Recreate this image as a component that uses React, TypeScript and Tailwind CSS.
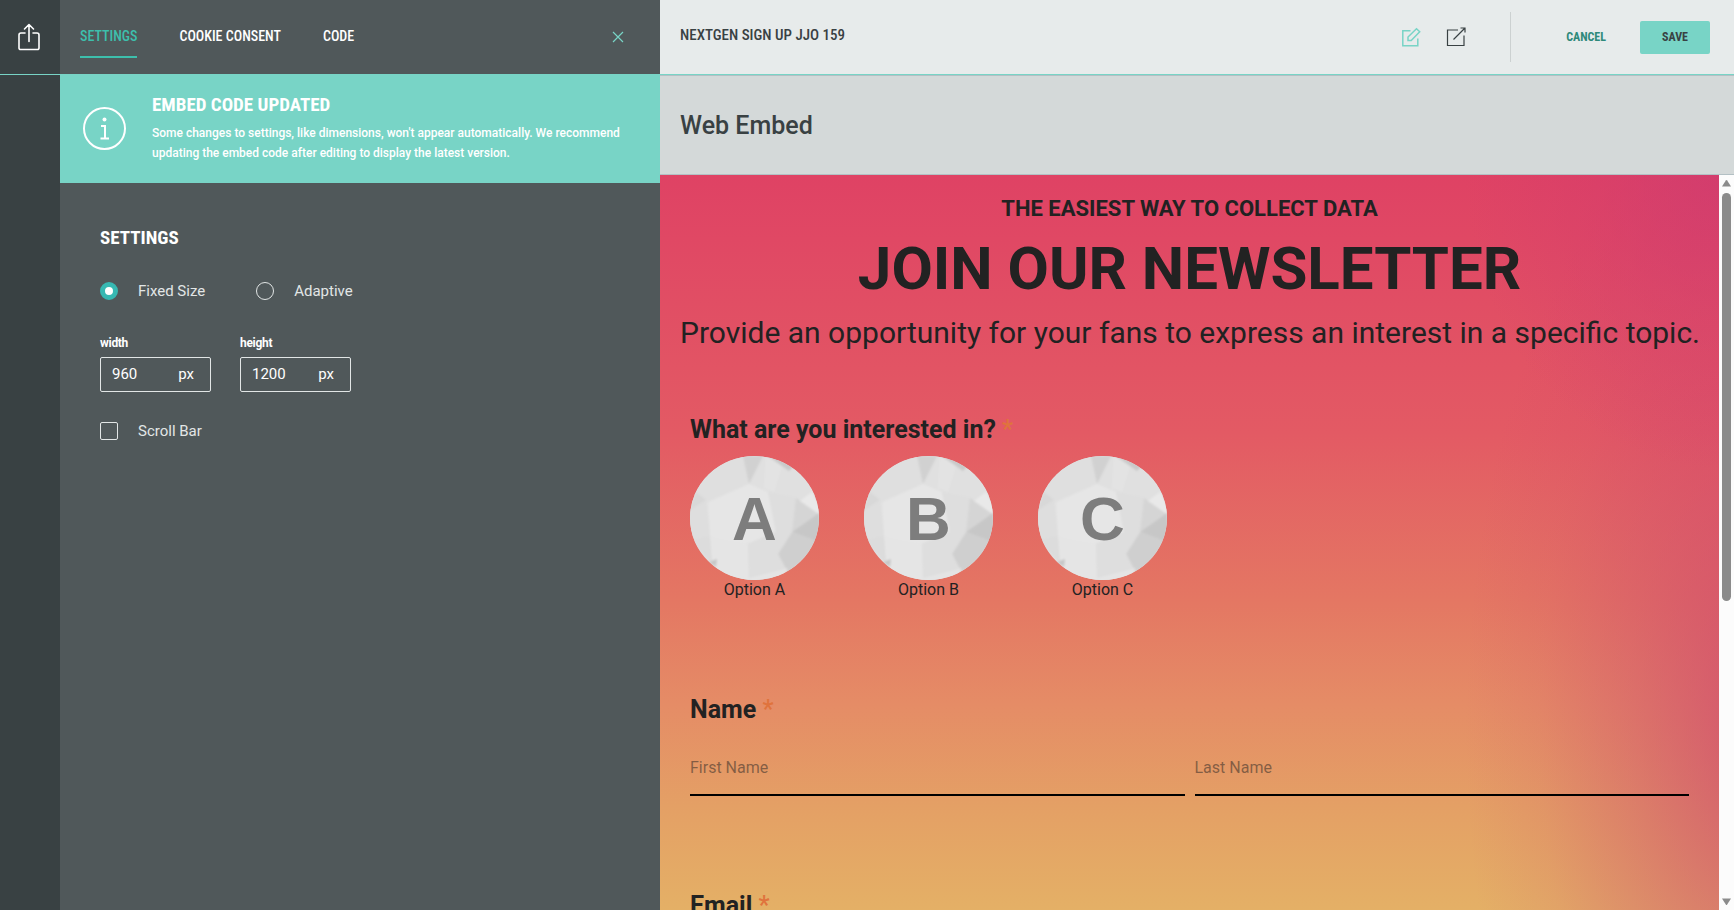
import React from "react";

const condensed = "font-['Roboto_Condensed','Liberation_Sans_Narrow',Roboto,sans-serif]";

function ShareIcon() {
  return (
    <svg width="22" height="28" viewBox="0 0 22 28" fill="none" stroke="#fff" strokeWidth="1.6" strokeLinecap="round" strokeLinejoin="round" aria-hidden="true">
      <path d="M7 10H3a2 2 0 0 0-2 2v13a1.5 1.5 0 0 0 1.5 1.500h17A1.500 1.500 0 0 0 21 25V12a2 2 0 0 0-2-2h-4M11 18.500V1.500M6.500 6 11 1.500 15.500 6" />
    </svg>
  );
}

function Facets() {
  return (
    <svg className="absolute inset-0 h-full w-full" viewBox="0 0 129 124" preserveAspectRatio="none" aria-hidden="true">
      <defs>
        <filter id="facet-soft"><feGaussianBlur stdDeviation="0.9" /></filter>
      </defs>
      <rect width="129" height="124" fill="#e0e0e0" />
      <g filter="url(#facet-soft)">
        <polygon points="-4,-4 53,-4 58,28 16,47 -4,35" fill="#dfdfdf" />
        <polygon points="-4,35 16,47 20,80 -4,84" fill="#dedede" />
        <polygon points="0,54 6,36 16,44" fill="#d8d8d8" />
        <polygon points="53,0 77,0 59,28" fill="#d1d1d1" />
        <polygon points="75,-4 133,-4 133,40 112,45 78,35 59,28" fill="#e0e0e0" />
        <polygon points="76,0 92,10 84,36 74,32" fill="#e3e3e3" />
        <polygon points="78,0 112,2 99,15" fill="#c9c9c9" />
        <polygon points="59,28 18,46 20,80 26,84 58,88 86,76 78,36" fill="#e6e6e6" />
        <polygon points="78,36 106,42 102,76 86,76" fill="#dedede" />
        <polygon points="106,42 129,57 102,76" fill="#d5d5d5" />
        <polygon points="110,45 122,36 133,56 127,57" fill="#e9e9e9" />
        <polygon points="102,76 129,57 133,88" fill="#c7c7c7" />
        <polygon points="102,76 133,88 98,118 88,98" fill="#cfcfcf" />
        <polygon points="86,76 102,76 88,98 98,116 59,124 57,88" fill="#dedede" />
        <polygon points="20,80 0,84 22,107 30,98" fill="#dcdcdc" />
        <polygon points="20,80 58,88 59,128 30,128 22,107" fill="#e5e5e5" />
        <polygon points="59,122 98,112 90,128 59,128" fill="#e4e4e4" />
        <polygon points="27,103 19,106 26,111" fill="#c6c6c6" />
      </g>
    </svg>
  );
}

function Option({ letter }: { letter: string }) {
  return (
    <button type="button" className="flex w-[129px] flex-col items-center">
      <span className="relative flex h-[124px] w-full items-center justify-center overflow-hidden rounded-[50%] pt-0.5">
        <Facets />
        <span className="relative font-['Liberation_Sans',sans-serif] text-[62px] leading-[64px] font-bold text-[#7d7d7d]">{letter}</span>
      </span>
      <span className="text-base leading-5">Option {letter}</span>
    </button>
  );
}

function Question({ children }: { children: React.ReactNode }) {
  return (
    <h3 className="text-[25px] leading-7 font-bold">
      {children} <span className="font-medium text-[#e0733d]">*</span>
    </h3>
  );
}

function SizeField({ id, label, value }: { id: string; label: string; value: string }) {
  return (
    <div className="w-[111px]">
      <label htmlFor={id} className="block text-xs leading-4 font-bold tracking-tight">{label}</label>
      <div className="mt-1.5 flex h-[35px] items-center rounded-xs border border-[#e2e6e6] pr-4 pb-px pl-[11px] text-[15px]">
        <input id={id} defaultValue={value} className="w-full min-w-0 bg-transparent outline-none" />
        <span>px</span>
      </div>
    </div>
  );
}

function NameInput({ label }: { label: string }) {
  return (
    <input
      aria-label={label}
      placeholder={label}
      className="h-14 w-full min-w-0 flex-1 border-b-2 border-black bg-transparent text-base outline-none placeholder:text-[#222]/50"
    />
  );
}

export default function App() {
  return (
    <div className="flex h-screen overflow-hidden bg-[#50585a] font-[Roboto,sans-serif] text-[#222]">
      <aside className="flex w-[60px] shrink-0 flex-col bg-[#394143]">
        <div className="flex h-[75px] items-center justify-center border-b border-[#78d4c6] pr-0.5">
          <button type="button" aria-label="Share"><ShareIcon /></button>
        </div>
      </aside>

      <section className="flex w-[600px] shrink-0 flex-col text-white">
        <nav className={`flex h-[74px] shrink-0 items-center gap-[42px] pr-9 pl-5 text-sm leading-5 font-medium ${condensed}`}>
          <a href="#settings" className="mt-2.5 border-b-2 border-[#3dbfac] pb-2.5 text-[#3dbfac]">SETTINGS</a>
          <a href="#cookie" className="pb-0.5">COOKIE CONSENT</a>
          <a href="#code" className="pb-0.5">CODE</a>
          <button type="button" aria-label="Close" className="ml-auto">
            <svg width="12" height="12" viewBox="0 0 12 12" stroke="#78d4c6" strokeWidth="1.200" aria-hidden="true"><path d="M1 1l10 10M11 1L1 11" /></svg>
          </button>
        </nav>

        <div className="flex h-[109px] shrink-0 items-center bg-[#78d4c6] pl-[23px]">
          <svg width="43" height="43" viewBox="0 0 43 43" fill="none" stroke="#fff" strokeWidth="2" className="shrink-0" aria-hidden="true">
            <circle cx="21.500" cy="21.500" r="20.500" />
            <path d="M18 19h4v12M17.500 31.500h8.500" />
            <circle cx="21.500" cy="12.500" r="2" fill="#fff" stroke="none" />
          </svg>
          <div className="ml-[26px] pb-0.5">
            <h2 className={`text-[19px] leading-6 font-bold ${condensed}`}>EMBED CODE UPDATED</h2>
            <p className="mt-1.5 w-[480px] text-xs leading-5 font-medium">
              Some changes to settings, like dimensions, won't appear automatically. We recommend updating the embed code after editing to display the latest version.
            </p>
          </div>
        </div>

        <form className="px-10 pt-[43px]">
          <h2 className={`text-[19px] leading-6 font-bold ${condensed}`}>SETTINGS</h2>
          <div className="mt-[31px] flex items-center text-[15px] leading-5 text-[#e2e6e6]">
            <label className="mr-[51px] flex items-center gap-5">
              <input type="radio" name="size" defaultChecked className="h-[18px] w-[18px] appearance-none rounded-full border border-[#e2e6e6] checked:border-[5px] checked:border-[#37b8b2] checked:bg-white" />
              Fixed Size
            </label>
            <label className="flex items-center gap-5">
              <input type="radio" name="size" className="h-[18px] w-[18px] appearance-none rounded-full border border-[#e2e6e6] checked:border-[5px] checked:border-[#37b8b2] checked:bg-white" />
              Adaptive
            </label>
          </div>
          <div className="mt-[34px] flex gap-[29px]">
            <SizeField id="width" label="width" value="960" />
            <SizeField id="height" label="height" value="1200" />
          </div>
          <label className="mt-[29px] flex items-center gap-5 text-[15px] leading-5 text-[#e2e6e6]">
            <input type="checkbox" className="h-[18px] w-[18px] appearance-none rounded-xs border border-[#e2e6e6] checked:bg-[#37b8b2]" />
            Scroll Bar
          </label>
        </form>
      </section>

      <main className="flex min-w-0 flex-1 flex-col">
        <header className={`flex h-[75px] shrink-0 items-center border-b border-[#78d4c6] bg-[#e7ebeb] pr-6 pl-5 ${condensed}`}>
          <h1 className="pb-1 text-[15px] leading-5 font-medium text-[#394143]">NEXTGEN SIGN UP JJO 159</h1>
          <button type="button" aria-label="Edit" className="ml-auto">
            <svg width="20" height="20" viewBox="0 0 20 20" fill="none" stroke="#78d4c6" strokeWidth="1.500" aria-hidden="true">
              <path d="M9.500 3.800H1.800v15h15V11.500" /><path d="M7 13.500V10L15.500 1.700l3.200 3-8.500 8.800z" />
            </svg>
          </button>
          <a href="#preview" aria-label="Open preview" className="ml-[25px]">
            <svg width="20" height="20" viewBox="0 0 20 20" fill="none" stroke="#394143" strokeWidth="1.200" aria-hidden="true">
              <path d="M12 3H1.500v15.500H18V8.500M7.500 12.500 19 1M14.500 1H19v4.500" />
            </svg>
          </a>
          <div className="ml-11 h-[50px] w-px bg-[#ccd1d1]" />
          <button type="button" className="ml-[55px] text-xs font-bold text-[#2e897a]">CANCEL</button>
          <button type="button" className="ml-[34px] h-[33px] w-[70px] rounded-xs bg-[#78d4c6] text-xs font-bold text-[#394143]">SAVE</button>
        </header>
        <div className="flex h-[100px] shrink-0 items-center border-y border-[#b3c0c4] bg-[#d4d9d9] pt-0.5 pl-5">
          <h2 className="text-[25px] font-medium text-[#394143]">Web Embed</h2>
        </div>

        <div className="flex min-h-0 flex-1">
          <div className="min-w-0 flex-1 overflow-hidden bg-[radial-gradient(ellipse_24%_40%_at_100%_0%,#cf3b70c0_0%,#d03a7050_50%,#d03a7000_100%),radial-gradient(ellipse_28%_85%_at_104%_75%,#cc4070b8_0%,#cc407058_45%,#cc40701c_75%,#cc407000_100%),linear-gradient(to_bottom,#df4264_0%,#e35a64_35%,#e47763_58%,#e58c66_72%,#e4a065_86%,#e4b066_100%)] px-5 pt-5">
            <header className="text-center">
              <p className="text-[22px] leading-7 font-bold">THE EASIEST WAY TO COLLECT DATA</p>
              <h2 className="mt-3 text-[60px] leading-[68px] font-bold">JOIN OUR NEWSLETTER</h2>
              <p className="mt-3 text-[30px] leading-9 whitespace-nowrap">Provide an opportunity for your fans to express an interest in a specific topic.</p>
            </header>
            <section className="mt-[65px] px-2.5">
              <Question>What are you interested in?</Question>
              <div className="mt-3 flex gap-[45px]">
                <Option letter="A" />
                <Option letter="B" />
                <Option letter="C" />
              </div>
            </section>
            <section className="mt-24 px-2.5">
              <Question>Name</Question>
              <div className="mt-4 flex gap-2.5">
                <NameInput label="First Name" />
                <NameInput label="Last Name" />
              </div>
            </section>
            <section className="mt-24 px-2.5">
              <Question>Email</Question>
            </section>
          </div>
          <div className="flex w-[15px] shrink-0 flex-col items-center bg-[#fcfcfc] py-1" aria-hidden="true">
            <svg width="9" height="8" viewBox="0 0 9 8" fill="#8b8b8b"><path d="M3.800 1.500q.7-1 1.400 0L9 7.500H0z" /></svg>
            <div className="mt-1.5 h-[408px] w-[9px] rounded-full bg-[#8b8b8b]" />
            <svg width="9" height="8" viewBox="0 0 9 8" fill="#8b8b8b" className="mt-auto"><path d="M3.800 6.500q.7 1 1.400 0L9 .5H0z" /></svg>
          </div>
        </div>
      </main>
    </div>
  );
}
